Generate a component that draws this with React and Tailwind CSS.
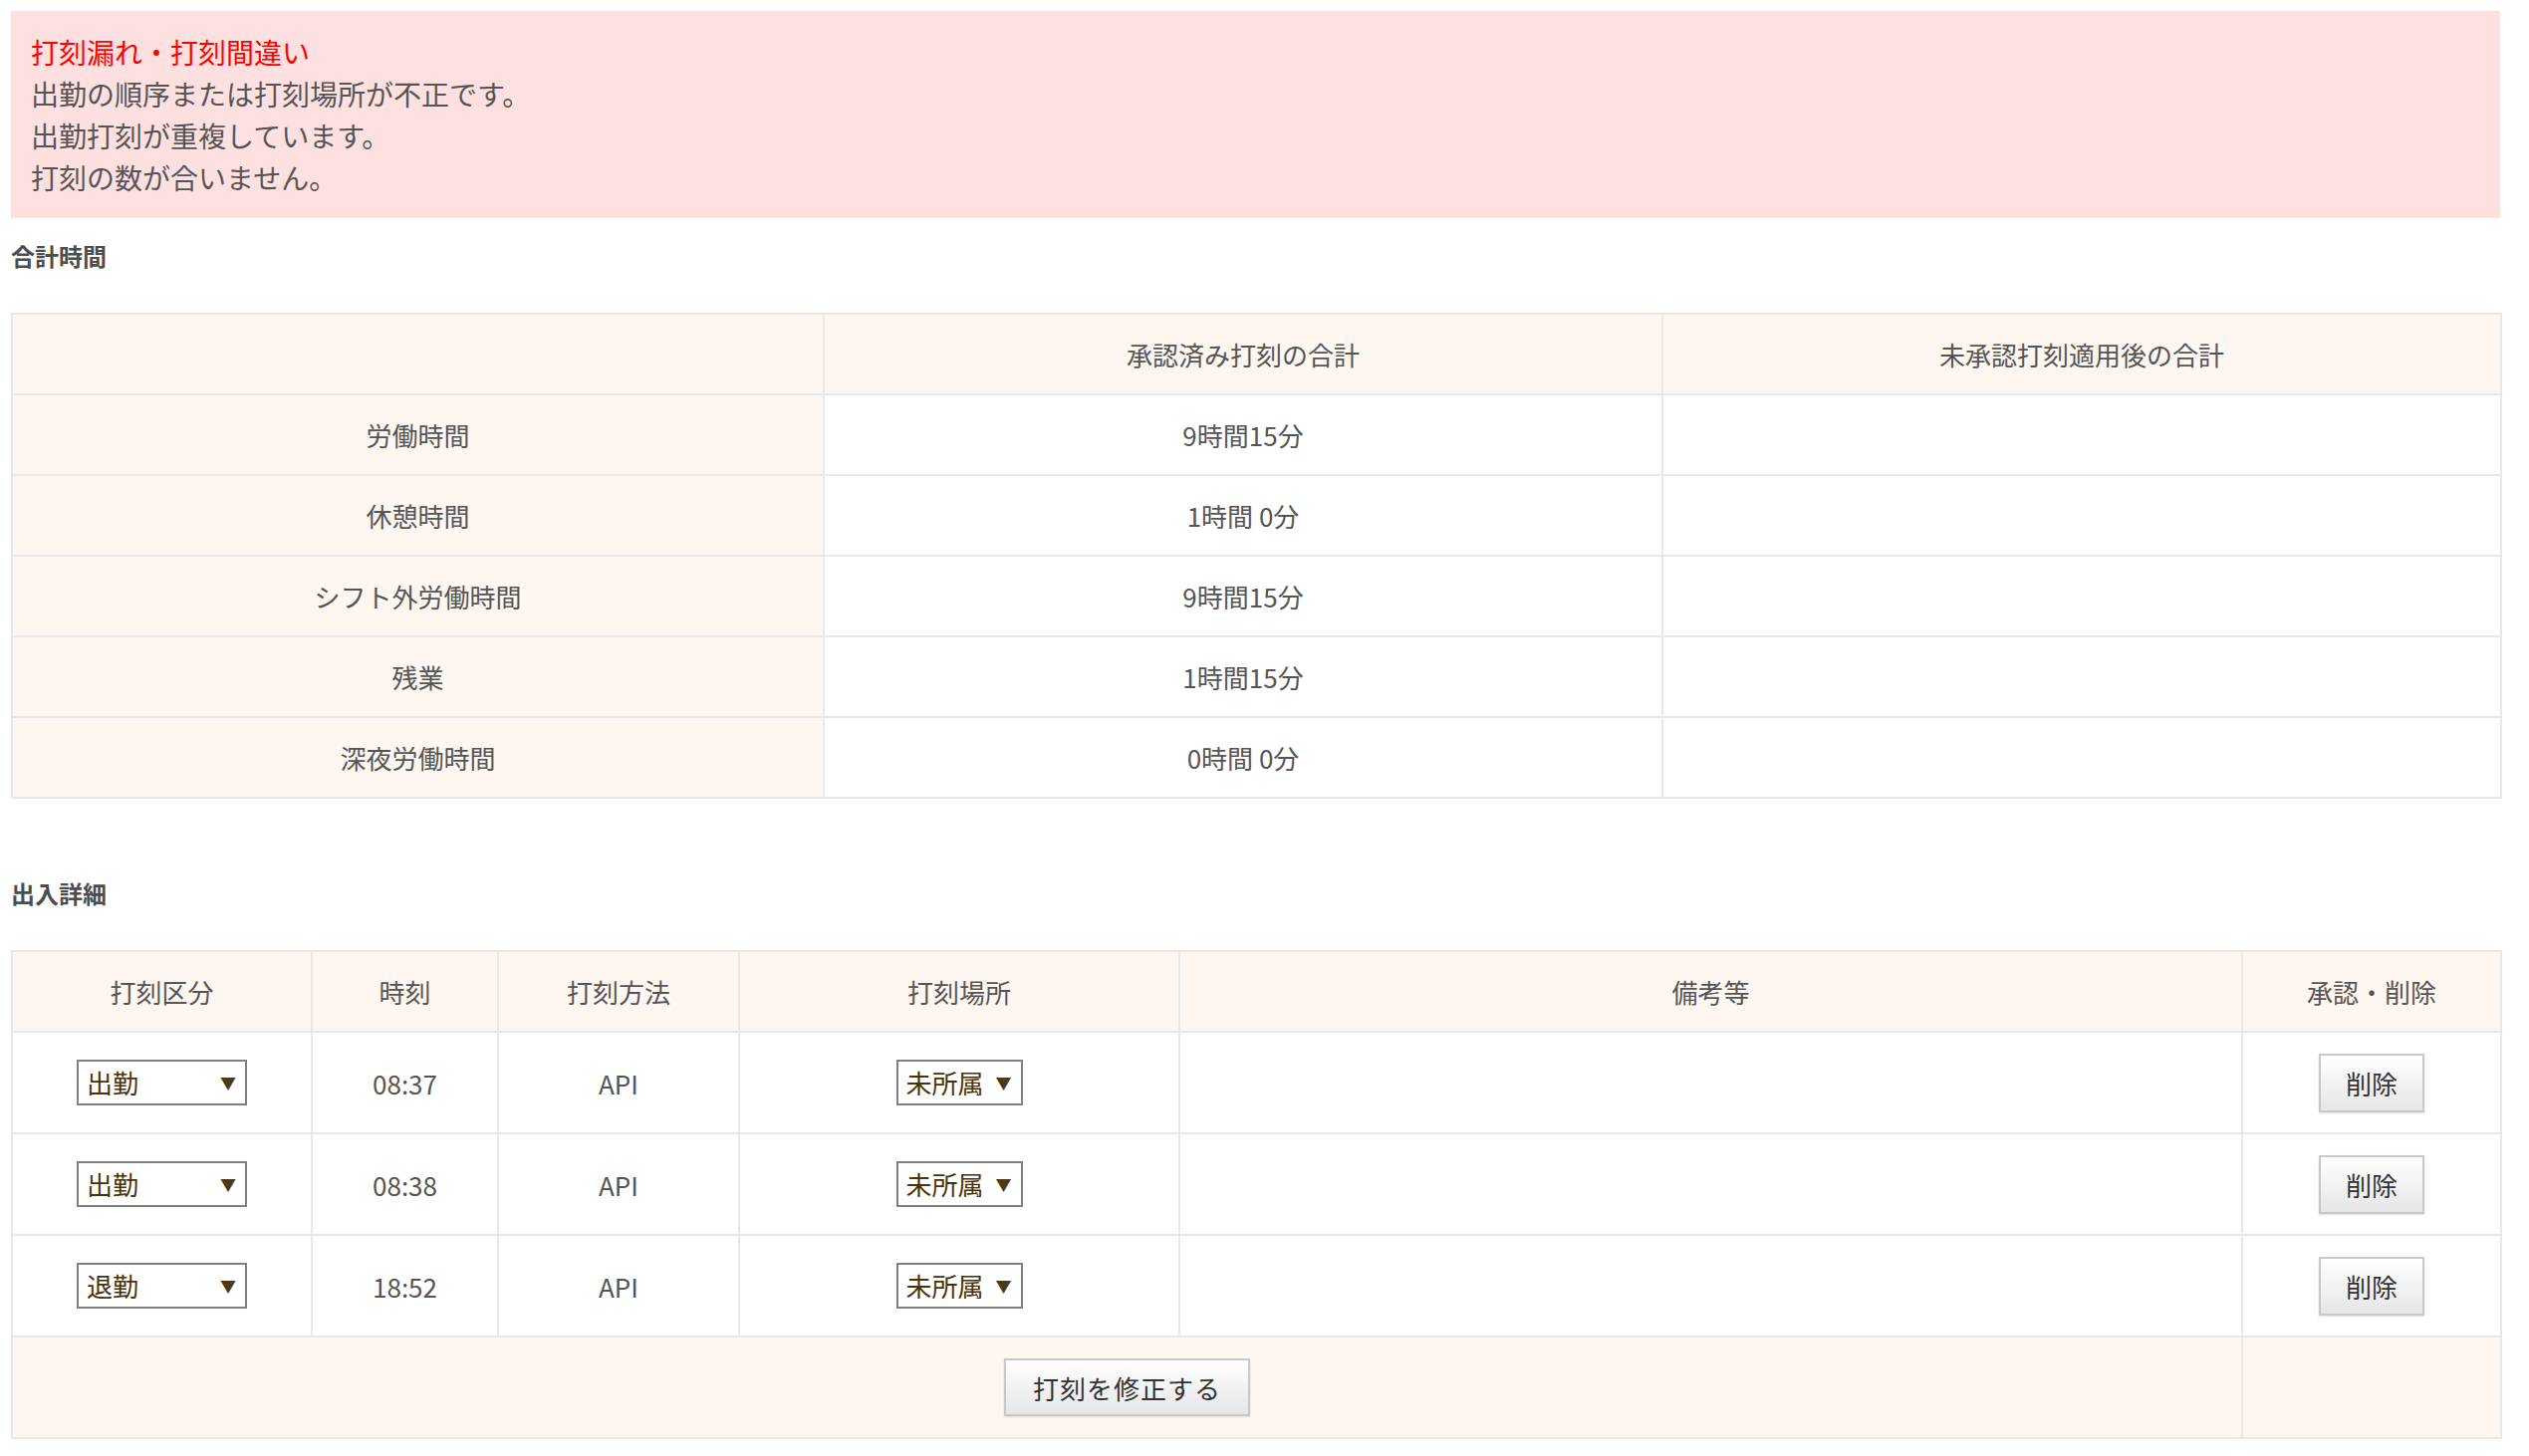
import { useState } from "react";

const font = { fontFamily: '"Noto Sans CJK JP", "Noto Sans", sans-serif' };

const summaryRows = [
  { label: "労働時間", approved: "9時間15分", pending: "" },
  { label: "休憩時間", approved: "1時間 0分", pending: "" },
  { label: "シフト外労働時間", approved: "9時間15分", pending: "" },
  { label: "残業", approved: "1時間15分", pending: "" },
  { label: "深夜労働時間", approved: "0時間 0分", pending: "" },
];

const initialStamps = [
  { type: "出勤", time: "08:37", method: "API", place: "未所属" },
  { type: "出勤", time: "08:38", method: "API", place: "未所属" },
  { type: "退勤", time: "18:52", method: "API", place: "未所属" },
];

function SelectBox({ value, options, width, onChange }) {
  return (
    <div className={`relative inline-block ${width}`}>
      <select
        value={value}
        onChange={onChange}
        className="w-full h-[46px] appearance-none border-2 border-[#7f7f7f] bg-white pl-[8px] pr-[30px] text-[26px] leading-none text-[#4a3206] outline-none"
        style={font}
      >
        {options.map((o) => (
          <option key={o} value={o}>
            {o}
          </option>
        ))}
      </select>
      <span className="pointer-events-none absolute right-[11px] top-1/2 -translate-y-1/2 text-[16px] text-[#4a3a1a]">
        ▼
      </span>
    </div>
  );
}

export default function App() {
  const [stamps, setStamps] = useState(initialStamps);

  const update = (i, key, value) => {
    setStamps((prev) => prev.map((s, idx) => (idx === i ? { ...s, [key]: value } : s)));
  };

  const cell = "border-2 border-[#e8e8e8] text-center align-middle";

  return (
    <div className="min-h-screen bg-white pt-[11px] pl-[11px] pb-[18px] text-[#555]" style={font}>
      <div className="w-[2499px]">
        {/* エラー表示 */}
        <div className="bg-[#fee0e1] px-[20px] py-[20px] text-[28px] leading-[42px]">
          <p className="text-[#ff0000]">打刻漏れ・打刻間違い</p>
          <p>出勤の順序または打刻場所が不正です。</p>
          <p>出勤打刻が重複しています。</p>
          <p>打刻の数が合いません。</p>
        </div>

        {/* 合計時間 */}
        <h3 className="mt-[20px] text-[24px] font-bold leading-[36px] text-[#4d4d4d]">合計時間</h3>
        <table className="mt-[39px] w-full table-fixed border-collapse text-[26px]">
          <colgroup>
            <col className="w-[815px]" />
            <col className="w-[842px]" />
            <col className="w-[842px]" />
          </colgroup>
          <thead>
            <tr className="h-[81px] bg-[#fef6f0]">
              <th className={`${cell} font-normal`}></th>
              <th className={`${cell} font-normal`}>承認済み打刻の合計</th>
              <th className={`${cell} font-normal`}>未承認打刻適用後の合計</th>
            </tr>
          </thead>
          <tbody>
            {summaryRows.map((r) => (
              <tr key={r.label} className="h-[81px]">
                <td className={`${cell} bg-[#fef6f0]`}>{r.label}</td>
                <td className={cell}>{r.approved}</td>
                <td className={cell}>{r.pending}</td>
              </tr>
            ))}
          </tbody>
        </table>

        {/* 出入詳細 */}
        <h3 className="mt-[77px] text-[24px] font-bold leading-[36px] text-[#4d4d4d]">出入詳細</h3>
        <table className="mt-[39px] w-full table-fixed border-collapse text-[26px]">
          <colgroup>
            <col className="w-[301px]" />
            <col className="w-[187px]" />
            <col className="w-[242px]" />
            <col className="w-[442px]" />
            <col className="w-[1067px]" />
            <col className="w-[260px]" />
          </colgroup>
          <thead>
            <tr className="h-[81px] bg-[#fef6f0]">
              <th className={`${cell} font-normal`}>打刻区分</th>
              <th className={`${cell} font-normal`}>時刻</th>
              <th className={`${cell} font-normal`}>打刻方法</th>
              <th className={`${cell} font-normal`}>打刻場所</th>
              <th className={`${cell} font-normal`}>備考等</th>
              <th className={`${cell} font-normal`}>承認・削除</th>
            </tr>
          </thead>
          <tbody>
            {stamps.map((s, i) => (
              <tr key={i} className="h-[102px]">
                <td className={cell}>
                  <SelectBox
                    value={s.type}
                    options={["出勤", "退勤"]}
                    width="w-[171px]"
                    onChange={(e) => update(i, "type", e.target.value)}
                  />
                </td>
                <td className={cell}>{s.time}</td>
                <td className={cell}>{s.method}</td>
                <td className={cell}>
                  <SelectBox
                    value={s.place}
                    options={["未所属"]}
                    width="w-[127px]"
                    onChange={(e) => update(i, "place", e.target.value)}
                  />
                </td>
                <td className={cell}></td>
                <td className={cell}>
                  <button className="h-[59px] w-[106px] border-2 border-[#c8c8c8] bg-gradient-to-b from-white to-[#e6e6e6] text-[26px] text-[#333] shadow-[0_1px_2px_rgba(0,0,0,0.12)]">
                    削除
                  </button>
                </td>
              </tr>
            ))}
            <tr className="h-[102px] bg-[#fef6f0]">
              <td className={cell} colSpan={5}>
                <button className="h-[58px] w-[247px] border-2 border-[#c8c8c8] bg-gradient-to-b from-white to-[#e6e6e6] text-[26px] tracking-[1px] text-[#333] shadow-[0_1px_2px_rgba(0,0,0,0.12)]">
                  打刻を修正する
                </button>
              </td>
              <td className={cell}></td>
            </tr>
          </tbody>
        </table>
      </div>
    </div>
  );
}
